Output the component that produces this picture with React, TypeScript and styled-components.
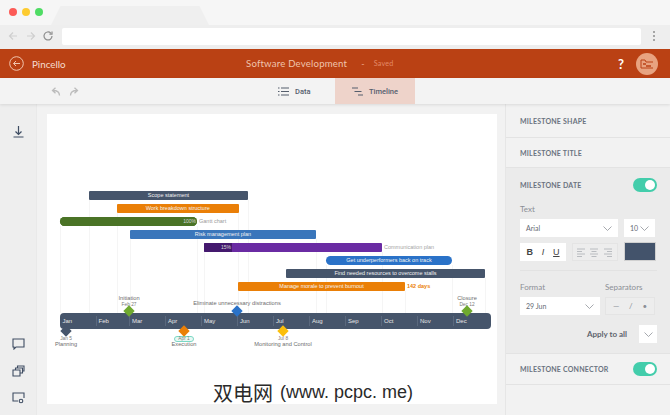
import React from "react";
import styled, { createGlobalStyle } from "styled-components";

const Global = createGlobalStyle`
  html, body { margin: 0; padding: 0; background: #f1f1f1; }
  * { box-sizing: border-box; }
`;

const Page = styled.div`
  position: relative;
  width: 670px;
  height: 415px;
  overflow: hidden;
  display: flex;
  flex-direction: column;
  font-family: Lato, "Open Sans", sans-serif;
  background: #f1f1f1;
`;

const TabStrip = styled.div`
  height: 25px;
  flex: none;
  background: #f6f6f6;
  display: flex;
  align-items: flex-start;
  padding: 8px 0 0 9px;
  gap: 5px;
`;
const Dot = styled.span<{ $c: string }>`
  width: 8px;
  height: 8px;
  border-radius: 50%;
  background: ${(p) => p.$c};
  flex: none;
`;
const BrowserTab = styled.div`
  width: 158px;
  height: 19px;
  margin: -2px 0 0 3px;
  background: #efefef;
  clip-path: polygon(6% 0, 94% 0, 100% 100%, 0 100%);
`;
const AddressBar = styled.div`
  height: 24px;
  flex: none;
  background: #eeeeee;
  display: flex;
  align-items: center;
  padding: 0 6px 2px 8px;
`;
const NavIcons = styled.svg`
  width: 46px;
  height: 12px;
  flex: none;
  margin-right: 8px;
`;
const Url = styled.div`
  width: 579px;
  height: 17px;
  background: #fff;
  border-radius: 2px;
`;
const Kebab = styled.svg`
  width: 4px;
  height: 12px;
  margin-left: 11px;
  flex: none;
`;

const Header = styled.header`
  height: 29px;
  flex: none;
  background: #ba4114;
  display: grid;
  grid-template-columns: 237px auto 1fr;
  align-items: center;
  padding: 0 12px 0 9px;
  color: #f6dccf;
`;
const Brand = styled.div`
  display: flex;
  align-items: center;
  gap: 8px;
  font-size: 9.8px;
`;
const TitleRow = styled.div`
  display: flex;
  align-items: center;
  font-size: 9.6px;
  letter-spacing: 0.2px;
  color: #f0c4ad;
`;
const Dash = styled.span`
  font-size: 9px;
  margin: 0 9px 0 14px;
  color: #e9a183;
`;
const Saved = styled.span`
  font-size: 7.2px;
  color: #e48b68;
`;
const HeaderRight = styled.div`
  display: flex;
  align-items: center;
  justify-content: flex-end;
  gap: 12px;
`;
const Help = styled.span`
  font-size: 13px;
  font-weight: 700;
  color: #fff;
`;
const Avatar = styled.div`
  width: 22px;
  height: 22px;
  border-radius: 50%;
  background: #e8a380;
  display: flex;
  align-items: center;
  justify-content: center;
`;

const Toolbar = styled.div`
  height: 26px;
  flex: none;
  background: #f3f3f3;
  display: flex;
  align-items: stretch;
  box-shadow: 0 1px 3px rgba(0, 0, 0, 0.1);
  position: relative;
`;
const UndoGroup = styled.div`
  width: 278px;
  padding-left: 51px;
  display: flex;
  align-items: center;
  gap: 8px;
`;
const TabButton = styled.div<{ $active?: boolean; $w: number; $pad: number }>`
  width: ${(p) => p.$w}px;
  padding-left: ${(p) => p.$pad}px;
  display: flex;
  align-items: center;
  gap: 6px;
  font-family: Roboto, sans-serif;
  font-size: 7.5px;
  font-weight: 500;
  color: #56606e;
  background: ${(p) => (p.$active ? "#eed3ca" : "transparent")};
`;

const Body = styled.div`
  flex: 1;
  min-height: 0;
  display: flex;
`;
const Rail = styled.aside`
  width: 37px;
  flex: none;
  background: #eeeeee;
  border-right: 1px solid #e9e9e9;
  display: flex;
  flex-direction: column;
  align-items: center;
  padding: 22px 0 11px 0;
`;
const RailSpacer = styled.div`
  flex: 1;
`;
const RailStack = styled.div`
  display: flex;
  flex-direction: column;
  gap: 15px;
`;
const CanvasArea = styled.main`
  width: 468px;
  flex: none;
  background: #f2f2f2;
  padding: 10px 0 0 10px;
`;
const Paper = styled.div`
  position: relative;
  width: 450px;
  height: 290px;
  background: #fff;
  font-family: "Liberation Sans", Arial, sans-serif;
`;
const GridLine = styled.div<{ $x: number; $top: number }>`
  position: absolute;
  left: ${(p) => p.$x - 47}px;
  top: ${(p) => p.$top - 113}px;
  bottom: ${403 - 312}px;
  width: 1px;
  background: #f5f5f5;
`;
const Bar = styled.div<{ $x: number; $y: number; $w: number; $bg: string; $round?: boolean }>`
  position: absolute;
  left: ${(p) => p.$x - 47}px;
  top: ${(p) => p.$y - 113}px;
  width: ${(p) => p.$w}px;
  height: 9px;
  background: ${(p) => p.$bg};
  border-radius: ${(p) => (p.$round ? "4.5px" : "1px")};
  color: #f2f2f2;
  font-size: 5.5px;
  line-height: 9px;
  text-align: center;
  white-space: nowrap;
  overflow: hidden;
`;
const Progress = styled.div<{ $w: number; $bg: string }>`
  position: absolute;
  left: 0;
  top: 0;
  height: 9px;
  width: ${(p) => p.$w}px;
  background: ${(p) => p.$bg};
  color: #d9d9d9;
  font-size: 5px;
  line-height: 9px;
  text-align: right;
  padding-right: 1px;
`;
const BarNote = styled.span<{ $x: number; $y: number; $c: string; $bold?: boolean }>`
  position: absolute;
  left: ${(p) => p.$x - 47}px;
  top: ${(p) => p.$y - 113}px;
  font-size: 5.5px;
  line-height: 9px;
  color: ${(p) => p.$c};
  font-weight: ${(p) => (p.$bold ? 700 : 400)};
  white-space: nowrap;
`;
const Timeline = styled.div`
  position: absolute;
  left: ${59.5 - 47}px;
  top: ${312 - 113}px;
  width: 431.5px;
  height: 16px;
  background: #46556b;
  border-radius: 4px;
  display: flex;
`;
const Month = styled.div<{ $w: number }>`
  width: ${(p) => p.$w}px;
  flex: none;
  color: #e6e6e6;
  font-size: 6px;
  line-height: 16px;
  padding-left: 3px;
  position: relative;
  &:not(:first-child)::before {
    content: "";
    position: absolute;
    left: 0;
    top: 3px;
    bottom: 3px;
    width: 1px;
    background: #5a687d;
  }
`;
const Diamond = styled.div<{ $x: number; $y: number; $c: string }>`
  position: absolute;
  left: ${(p) => p.$x - 47 - 4}px;
  top: ${(p) => p.$y - 113 - 4}px;
  width: 8px;
  height: 8px;
  background: ${(p) => p.$c};
  transform: rotate(45deg);
`;
const MileLabel = styled.div<{ $x: number; $y: number; $date?: boolean }>`
  position: absolute;
  left: ${(p) => p.$x - 47}px;
  top: ${(p) => p.$y - 113}px;
  transform: translateX(-50%);
  white-space: nowrap;
  font-size: ${(p) => (p.$date ? 4.8 : 5.7)}px;
  line-height: 7px;
  color: ${(p) => (p.$date ? "#7a7a7a" : "#6e6e6e")};
`;
const DateHighlight = styled.div`
  position: absolute;
  left: ${174 - 47}px;
  top: ${334.5 - 113}px;
  width: 20px;
  height: 6px;
  border: 1.5px solid #7bd8c4;
  border-radius: 3px;
  background: #e8f8f4;
`;

const Panel = styled.aside`
  flex: 1;
  background: #f2f2f2;
  border-left: 1px solid #e6e6e6;
  padding-top: 1px;
  display: flex;
  flex-direction: column;
`;
const Section = styled.section<{ $h: number; $open?: boolean }>`
  height: ${(p) => p.$h}px;
  flex: none;
  background: ${(p) => (p.$open ? "#ebebeb" : "transparent")};
  border-bottom: 1px solid #e3e3e3;
  padding: 0 13px 0 14px;
`;
const SectionHead = styled.div<{ $h: number }>`
  height: ${(p) => p.$h}px;
  display: flex;
  align-items: center;
  justify-content: space-between;
  font-size: 7px;
  font-weight: 700;
  letter-spacing: 0.2px;
  color: #6a7280;
`;
const Toggle = styled.div`
  width: 24px;
  height: 14px;
  border-radius: 7px;
  background: #43cdab;
  display: flex;
  justify-content: flex-end;
  padding: 2px 2px;
`;
const Knob = styled.div`
  width: 10px;
  height: 10px;
  border-radius: 50%;
  background: #fff;
`;
const FieldLabel = styled.div<{ $top?: number }>`
  font-size: 8px;
  line-height: 12px;
  margin-top: ${(p) => p.$top ?? 0}px;
  color: #8b8f96;
`;
const Row = styled.div<{ $gap: number; $top: number }>`
  display: flex;
  gap: ${(p) => p.$gap}px;
  margin-top: ${(p) => p.$top}px;
`;
const Select = styled.div<{ $w: number }>`
  width: ${(p) => p.$w}px;
  height: 18px;
  background: #fff;
  display: flex;
  align-items: center;
  justify-content: space-between;
  padding: 0 6px;
  font-size: 7px;
  color: #666c75;
`;
const Group = styled.div<{ $w: number; $white?: boolean }>`
  width: ${(p) => p.$w}px;
  height: 18px;
  background: ${(p) => (p.$white ? "#fff" : "#ededed")};
  border: ${(p) => (p.$white ? "none" : "1px solid #e4e4e4")};
  display: flex;
  align-items: center;
  justify-content: space-around;
  padding: 0 2px;
`;
const StyleLetter = styled.span<{ $s: "b" | "i" | "u" }>`
  font-family: "Liberation Sans", Arial, sans-serif;
  font-size: 9px;
  color: #444;
  font-weight: ${(p) => (p.$s === "b" ? 700 : 400)};
  font-style: ${(p) => (p.$s === "i" ? "italic" : "normal")};
  text-decoration: ${(p) => (p.$s === "u" ? "underline" : "none")};
`;
const SepGlyph = styled.span`
  font-size: 8px;
  color: #8b8f96;
`;
const Swatch = styled.div`
  width: 32px;
  height: 19px;
  margin-top: -1px;
  background: #43536b;
  border: 1px solid #d0d0d0;
`;
const Divider = styled.div`
  height: 1px;
  background: #e2e2e2;
  margin-top: 9px;
`;
const LabelRow = styled.div`
  display: flex;
  margin-top: 10px;
`;
const LabelCell = styled.div<{ $w: number }>`
  width: ${(p) => p.$w}px;
`;
const ApplyRow = styled.div`
  display: flex;
  align-items: center;
  justify-content: flex-end;
  gap: 12px;
  margin-top: 10px;
  font-size: 8px;
  font-weight: 700;
  color: #5e646d;
`;
const ApplyButton = styled.div`
  width: 18px;
  height: 18px;
  background: #fff;
  display: flex;
  align-items: center;
  justify-content: center;
`;
const Watermark = styled.div`
  position: absolute;
  left: 213px;
  top: 379px;
  display: flex;
  align-items: center;
  gap: 7px;
  height: 26px;
  color: #2a2a2a;
  white-space: pre;
  text-shadow: 0 0 2px #fff, 0 0 2px #fff, 0 0 3px #fff;
`;
const WatermarkHan = styled.span`
  font-family: "Noto Sans CJK SC", sans-serif;
  font-size: 20px;
`;
const WatermarkLatin = styled.span`
  font-family: "Liberation Sans", sans-serif;
  font-size: 18px;
`;

const Chevron = ({ w = 9 }: { w?: number }) => (
  <svg width={w} height="5" viewBox="0 0 9 5" fill="none" stroke="#8f9399" strokeWidth="0.8">
    <path d="M.5.5 4.5 4.5 8.5.5" />
  </svg>
);
const AlignIcon = ({ d }: { d: string }) => (
  <svg width="9" height="9" viewBox="0 0 9 9" fill="none" stroke="#b9bcc0" strokeWidth="1">
    <path d={d} />
  </svg>
);

const bars = [
  { x: 89, y: 190, w: 159, bg: "#46556b", t: "Scope statement" },
  { x: 117, y: 203, w: 121.5, bg: "#ea7f07", t: "Work breakdown structure" },
  { x: 130, y: 229, w: 186, bg: "#3a76bb", t: "Risk management plan" },
  { x: 326, y: 255, w: 126, bg: "#2a72c8", t: "Get underperformers back on track", round: true },
  { x: 286, y: 268, w: 199, bg: "#46556b", t: "Find needed resources to overcome stalls" },
];
const lines: [number, number][] = [
  [60, 225], [89, 199], [117, 212], [130, 238], [197, 225], [204, 251], [238, 212],
  [248, 199], [316, 238], [326, 264], [382, 251], [405, 290], [452, 264], [485, 277],
];
const months: [string, number][] = [
  ["Jan", 36], ["Feb", 33.5], ["Mar", 36], ["Apr", 36], ["May", 36], ["Jun", 36],
  ["Jul", 36], ["Aug", 36], ["Sep", 36], ["Oct", 36], ["Nov", 36], ["Dec", 36.5],
];

export default function App() {
  return (
    <Page>
      <Global />
      <TabStrip>
        <Dot $c="#fc5b57" />
        <Dot $c="#fdcb30" />
        <Dot $c="#4fdc64" />
        <BrowserTab />
      </TabStrip>
      <AddressBar>
        <NavIcons viewBox="0 0 46 12" fill="none" strokeWidth="1.2">
          <path d="M9 6H1.5M5 2.5 1.5 6 5 9.5" stroke="#cfcfcf" />
          <path d="M19 6h7.5M23 2.5 26.5 6 23 9.5" stroke="#cfcfcf" />
          <path d="M44 6a4 4 0 1 1-1.2-2.9M44 1.5v2.6h-2.6" stroke="#8e8e8e" />
        </NavIcons>
        <Url />
        <Kebab viewBox="0 0 4 12" fill="#8d8d8d">
          <circle cx="2" cy="2" r="1" />
          <circle cx="2" cy="6" r="1" />
          <circle cx="2" cy="10" r="1" />
        </Kebab>
      </AddressBar>
      <Header>
        <Brand>
          <svg width="15" height="15" viewBox="0 0 15 15" fill="none" stroke="#f0c4ad" strokeWidth="1">
            <circle cx="7.5" cy="7.5" r="6.8" />
            <path d="M11 7.5H4.5M7 5 4.5 7.5 7 10" />
          </svg>
          <span>Pincello</span>
        </Brand>
        <TitleRow>
          <span>Software Development</span>
          <Dash>-</Dash>
          <Saved>Saved</Saved>
        </TitleRow>
        <HeaderRight>
          <Help>?</Help>
          <Avatar>
            <svg width="14" height="10" viewBox="0 0 14 10" fill="none" stroke="#ba4114" strokeWidth="1">
              <path d="M1 1v8h12M1 1h4l1 2h7" />
              <path d="M3 5h3M6 7h5" strokeWidth="1.4" />
            </svg>
          </Avatar>
        </HeaderRight>
      </Header>
      <Toolbar>
        <UndoGroup>
          <svg width="10" height="9" viewBox="0 0 10 9" fill="none" stroke="#bcbcbc" strokeWidth="1.3">
            <path d="M8.5 8.5C8.5 5 6.5 3.5 2 3.5M4.5.7 1.5 3.5l3 2.8" />
          </svg>
          <svg width="10" height="9" viewBox="0 0 10 9" fill="none" stroke="#bcbcbc" strokeWidth="1.3">
            <path d="M1.5 8.5C1.5 5 3.5 3.5 8 3.5M5.5.7l3 2.8-3 2.8" />
          </svg>
        </UndoGroup>
        <TabButton $w={57} $pad={0}>
          <svg width="11" height="9" viewBox="0 0 11 9" fill="none" stroke="#555e6c" strokeWidth="1.2">
            <path d="M0 1h1.5M3 1h8M0 4.5h1.5M3 4.5h8M0 8h1.5M3 8h8" />
          </svg>
          Data
        </TabButton>
        <TabButton $active $w={80} $pad={17}>
          <svg width="11" height="9" viewBox="0 0 11 9" fill="none" stroke="#555e6c" strokeWidth="1.2">
            <path d="M0 1h6M2.5 4.5h7M6 8h5" />
          </svg>
          Timeline
        </TabButton>
      </Toolbar>
      <Body>
        <Rail>
          <svg width="11" height="12" viewBox="0 0 11 12" fill="none" stroke="#3f4d63" strokeWidth="1.2">
            <path d="M5.5 0v8M2.5 5.5l3 3 3-3M.5 11h10" />
          </svg>
          <RailSpacer />
          <RailStack>
            <svg width="13" height="12" viewBox="0 0 13 12" fill="none" stroke="#3f4d63" strokeWidth="1.1">
              <path d="M1 1h11v8H4l-2 2V9H1z" />
            </svg>
            <svg width="13" height="12" viewBox="0 0 13 12" fill="none" stroke="#3f4d63" strokeWidth="1.1">
              <path d="M1 5h7v6H1zM3.5 5V3h7v5H8M5.5 3V1H12v5h-1.5" />
            </svg>
            <svg width="13" height="12" viewBox="0 0 13 12" fill="none" stroke="#3f4d63" strokeWidth="1.1">
              <path d="M6 9H1V1h11v5" />
              <circle cx="9" cy="9" r="1.8" />
            </svg>
          </RailStack>
        </Rail>
        <CanvasArea>
          <Paper>
            {lines.map(([x, t]) => (
              <GridLine key={x} $x={x} $top={t} />
            ))}
            {bars.map((b) => (
              <Bar key={b.t} $x={b.x} $y={b.y} $w={b.w} $bg={b.bg} $round={b.round}>
                {b.t}
              </Bar>
            ))}
            <Bar $x={60} $y={216} $w={137} $bg="#4a7326" $round>
              <Progress $w={137} $bg="#4a7326">100%</Progress>
            </Bar>
            <BarNote $x={199} $y={216} $c="#9a9a9a">Gantt chart</BarNote>
            <Bar $x={204} $y={242} $w={178} $bg="#6a2ba3">
              <Progress $w={28} $bg="#44196e">15%</Progress>
            </Bar>
            <BarNote $x={384} $y={242} $c="#a5a5a5">Communication plan</BarNote>
            <Bar $x={238} $y={281} $w={167} $bg="#ea7f07">
              Manage morale to prevent burnout
            </Bar>
            <BarNote $x={407} $y={281} $c="#ea7f07" $bold>142 days</BarNote>

            <Timeline>
              {months.map(([m, w]) => (
                <Month key={m} $w={w}>{m}</Month>
              ))}
            </Timeline>

            <MileLabel $x={129} $y={293.5}>Initiation</MileLabel>
            <MileLabel $x={129} $y={299.5} $date>Feb 27</MileLabel>
            <Diamond $x={129} $y={310} $c="#6fa92f" />
            <MileLabel $x={237} $y={298.5}>Eliminate unnecessary distractions</MileLabel>
            <Diamond $x={237} $y={310} $c="#2a72c8" />
            <MileLabel $x={467} $y={293.5}>Closure</MileLabel>
            <MileLabel $x={467} $y={299.5} $date>Dec 12</MileLabel>
            <Diamond $x={467} $y={310} $c="#6fa92f" />

            <Diamond $x={66} $y={330} $c="#46556b" />
            <MileLabel $x={66} $y={334} $date>Jan 5</MileLabel>
            <MileLabel $x={66} $y={339.5}>Planning</MileLabel>
            <DateHighlight />
            <Diamond $x={184} $y={330} $c="#ea7f07" />
            <MileLabel $x={184} $y={334} $date>Apr 1</MileLabel>
            <MileLabel $x={184} $y={339.5}>Execution</MileLabel>
            <Diamond $x={283} $y={330} $c="#fbbf0b" />
            <MileLabel $x={283} $y={334} $date>Jul 8</MileLabel>
            <MileLabel $x={283} $y={339.5}>Monitoring and Control</MileLabel>
          </Paper>
        </CanvasArea>
        <Panel>
          <Section $h={33}>
            <SectionHead $h={32}>MILESTONE SHAPE</SectionHead>
          </Section>
          <Section $h={30}>
            <SectionHead $h={30}>MILESTONE TITLE</SectionHead>
          </Section>
          <Section $h={186} $open>
            <SectionHead $h={33}>
              MILESTONE DATE
              <Toggle><Knob /></Toggle>
            </SectionHead>
            <FieldLabel $top={2}>Text</FieldLabel>
            <Row $gap={6} $top={4}>
              <Select $w={98}>Arial<Chevron /></Select>
              <Select $w={31}>10<Chevron /></Select>
            </Row>
            <Row $gap={6} $top={6}>
              <Group $w={46} $white>
                <StyleLetter $s="b">B</StyleLetter>
                <StyleLetter $s="i">I</StyleLetter>
                <StyleLetter $s="u">U</StyleLetter>
              </Group>
              <Group $w={46}>
                <AlignIcon d="M0 1h8M0 3.5h5M0 6h8M0 8.5h5" />
                <AlignIcon d="M0 1h8M1.5 3.5h5M0 6h8M1.5 8.5h5" />
                <AlignIcon d="M0 1h8M3 3.5h5M0 6h8M3 8.5h5" />
              </Group>
              <Swatch />
            </Row>
            <Divider />
            <LabelRow>
              <LabelCell $w={85}><FieldLabel>Format</FieldLabel></LabelCell>
              <FieldLabel>Separators</FieldLabel>
            </LabelRow>
            <Row $gap={5} $top={4}>
              <Select $w={80}>29 Jun<Chevron /></Select>
              <Group $w={50}>
                <SepGlyph>—</SepGlyph>
                <SepGlyph>/</SepGlyph>
                <SepGlyph>•</SepGlyph>
              </Group>
            </Row>
            <ApplyRow>
              Apply to all
              <ApplyButton><Chevron /></ApplyButton>
            </ApplyRow>
          </Section>
          <Section $h={31}>
            <SectionHead $h={30}>
              MILESTONE CONNECTOR
              <Toggle><Knob /></Toggle>
            </SectionHead>
          </Section>
        </Panel>
      </Body>
      <Watermark>
        <WatermarkHan>双电网</WatermarkHan>
        <WatermarkLatin>{"(www. pcpc. me)"}</WatermarkLatin>
      </Watermark>
    </Page>
  );
}
